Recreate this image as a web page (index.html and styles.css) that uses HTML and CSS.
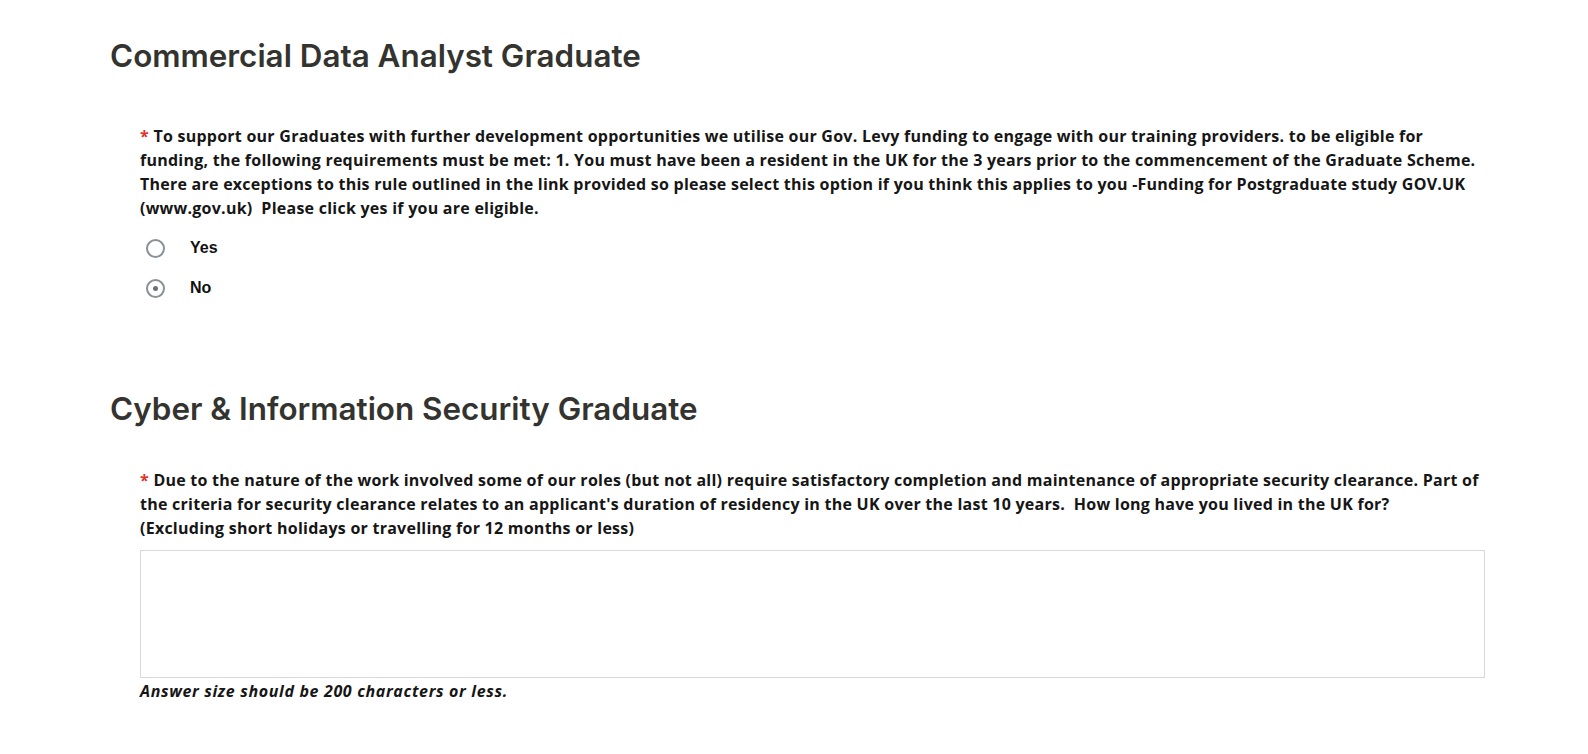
FILE: index.html
```html
<!DOCTYPE html>
<html>
<head>
  <title>Graduate Application Questions</title>
  <link rel="stylesheet" href="styles.css">
</head>
<body>
  <div class="container">
    <section class="section">
      <h2 class="section-title">Commercial Data Analyst Graduate</h2>
      <div class="question">
        <p class="question-text required">To support our Graduates with further development opportunities we utilise our Gov. Levy funding to engage with our training providers. to be eligible for funding, the following requirements must be met: 1. You must have been a resident in the UK for the 3 years prior to the commencement of the Graduate Scheme. There are exceptions to this rule outlined in the link provided so please select this option if you think this applies to you -Funding for Postgraduate study GOV.UK (www.gov.uk)&nbsp; Please click yes if you are eligible.</p>
        <div class="options">
          <label class="option">
            <input type="radio" name="levy" value="yes">
            <span class="radio"></span>
            <span class="option-label">Yes</span>
          </label>
          <label class="option">
            <input type="radio" name="levy" value="no" checked>
            <span class="radio"></span>
            <span class="option-label">No</span>
          </label>
        </div>
      </div>
    </section>

    <section class="section section-cyber">
      <h2 class="section-title">Cyber &amp; Information Security Graduate</h2>
      <div class="question">
        <p class="question-text required">Due to the nature of the work involved some of our roles (but not all) require satisfactory completion and maintenance of appropriate security clearance. Part of the criteria for security clearance relates to an applicant's duration of residency in the UK over the last 10 years.&nbsp; How long have you lived in the UK for?<br>(Excluding short holidays or travelling for 12 months or less)</p>
        <textarea class="answer" maxlength="200"></textarea>
        <p class="hint">Answer size should be 200 characters or less.</p>
      </div>
    </section>
  </div>
</body>
</html>
```

FILE: styles.css
```css
* {
  margin: 0;
  padding: 0;
  box-sizing: border-box;
}

body {
  font-family: 'Open Sans', 'DejaVu Sans', sans-serif;
  background: #fff;
  color: #1a1a1a;
}

.container {
  width: 1485px;
  padding: 37px 0 0 110px;
}

.section-title {
  font-family: 'Inter', 'Roboto', sans-serif;
  font-size: 31.4px;
  line-height: 38px;
  font-weight: 600;
  color: #33332f;
}

.question {
  padding-left: 30px;
  margin-top: 49px;
}

.question-text {
  font-size: 16px;
  line-height: 24px;
  font-weight: 700;
  letter-spacing: 0.25px;
  color: #161616;
}

.required::before {
  content: "* ";
  color: #e0342b;
}

.options {
  display: flex;
  flex-direction: column;
  gap: 16px;
  margin-top: 16px;
}

.option {
  display: flex;
  align-items: center;
  height: 24px;
  cursor: pointer;
}

.option input {
  display: none;
}

.radio {
  width: 19px;
  height: 19px;
  margin-left: 6px;
  border: 2px solid #8a9097;
  border-radius: 50%;
  display: flex;
  align-items: center;
  justify-content: center;
}

.option input:checked + .radio::after {
  content: "";
  width: 5px;
  height: 5px;
  border-radius: 50%;
  background: #6b7078;
}

.option-label {
  margin-left: 25px;
  font-family: 'Liberation Sans', sans-serif;
  font-size: 16px;
  font-weight: 700;
  color: #111;
}

.section-cyber {
  margin-top: 90px;
}

.section-cyber .question {
  margin-top: 40px;
}

.answer {
  display: block;
  width: 100%;
  height: 128px;
  margin-top: 10px;
  border: 1px solid #d9d9d9;
  resize: none;
  font-family: inherit;
  font-size: 15px;
  padding: 8px 10px;
}

.answer:focus {
  outline: none;
  border-color: #8a9097;
}

.hint {
  margin-top: 1px;
  font-size: 16px;
  line-height: 24px;
  font-weight: 700;
  font-style: italic;
  letter-spacing: 0.65px;
  color: #161616;
}
```
